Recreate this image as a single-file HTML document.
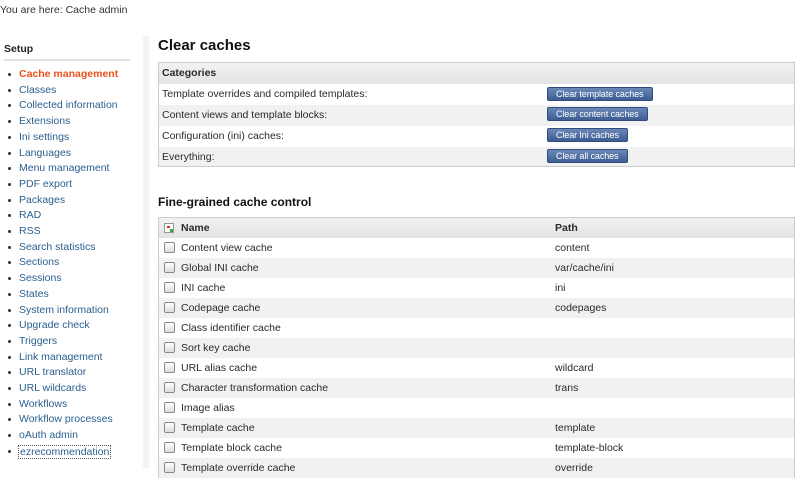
<!DOCTYPE html>
<html><head><style>
*{margin:0;padding:0;box-sizing:border-box}
body{width:800px;height:476px;overflow:hidden;background:#fff;font-family:"Liberation Sans",sans-serif;font-size:10.5px;color:#2a2a2a;position:relative}
.a{position:absolute;white-space:nowrap}
.nav{color:#2a5f8f}
.dot{position:absolute;width:3px;height:3px;background:#333;border-radius:50%}
.row{position:absolute;left:158px;width:637px;height:21px;border-left:1px solid #ccc;border-right:1px solid #ccc}
.g{background:#f1f1f1}
.btn{position:absolute;left:547px;height:14px;background:linear-gradient(#6a88b8,#3d5d93);border:1px solid #2f4c7d;border-radius:2px;color:#fff;font-size:9px;line-height:12px;padding-left:8px;letter-spacing:-0.1px}
.cb{position:absolute;left:164px;width:11px;height:11px;border:1px solid #888;border-radius:2px;background:linear-gradient(#fff,#ddd)}
</style></head><body>
<div class="a" style="left:0;top:4px;color:#333">You are here: Cache admin</div>
<div class="a" style="left:4px;top:43px;font-weight:bold;color:#222">Setup</div>
<div style="position:absolute;left:4px;top:59px;width:126px;height:2px;background:#e2e2e2"></div>
<div style="position:absolute;left:143px;top:36px;width:6px;height:432px;background:#f3f3f3"></div>
<div id="nav"></div>
<div class="a" style="left:158px;top:37px;font-size:15px;font-weight:bold;color:#111">Clear caches</div>
<div class="row" style="top:62px;height:22px;border-top:1px solid #ccc;background:linear-gradient(#f2f2f2,#e3e3e3);"><span class="a" style="left:3px;top:4px;font-weight:bold">Categories</span></div>
<div class="row" style="top:84px"><span class="a" style="left:3px;top:4px">Template overrides and compiled templates:</span></div>
<div class="row g" style="top:105px"><span class="a" style="left:3px;top:4px">Content views and template blocks:</span></div>
<div class="row" style="top:126px"><span class="a" style="left:3px;top:4px">Configuration (ini) caches:</span></div>
<div class="row g" style="top:147px;border-bottom:1px solid #ccc;height:20px"><span class="a" style="left:3px;top:4px">Everything:</span></div>
<div class="btn" style="top:87px;width:106px">Clear template caches</div>
<div class="btn" style="top:107px;width:101px">Clear content caches</div>
<div class="btn" style="top:128px;width:81px">Clear Ini caches</div>
<div class="btn" style="top:149px;width:81px">Clear all caches</div>
<div class="a" style="left:158px;top:195px;font-size:12px;font-weight:bold;color:#111">Fine-grained cache control</div>
<div class="row" style="top:217px;height:21px;border-top:1px solid #ccc;background:linear-gradient(#f2f2f2,#e3e3e3)">
<span style="position:absolute;left:5px;top:5px;width:10px;height:10px;border:1px solid #999;background:#fff"><span style="position:absolute;left:2px;top:2px;width:3px;height:2px;background:#c33"></span><span style="position:absolute;left:5px;top:5px;width:3px;height:3px;background:#3a3"></span></span>
<span class="a" style="left:22px;top:4px;font-weight:bold">Name</span><span class="a" style="left:396px;top:4px;font-weight:bold">Path</span></div>
<div id="t2"></div>
<script>
var n=["Cache management","Classes","Collected information","Extensions","Ini settings","Languages","Menu management","PDF export","Packages","RAD","RSS","Search statistics","Sections","Sessions","States","System information","Upgrade check","Triggers","Link management","URL translator","URL wildcards","Workflows","Workflow processes","oAuth admin","ezrecommendation"];
var h="";
n.forEach(function(t,i){var y=68+i*15.7;
h+='<div class="dot" style="left:8px;top:'+(y+5)+'px"></div><div class="a nav" style="left:19px;top:'+y+'px;'+(i==0?'color:#e8501c;font-weight:bold;':'')+(i==24?'border:1px dotted #555;padding:0 1px;left:18px;':'')+'">'+t+'</div>';});
document.getElementById("nav").innerHTML=h;
var r=[["Content view cache","content"],["Global INI cache","var/cache/ini"],["INI cache","ini"],["Codepage cache","codepages"],["Class identifier cache",""],["Sort key cache",""],["URL alias cache","wildcard"],["Character transformation cache","trans"],["Image alias",""],["Template cache","template"],["Template block cache","template-block"],["Template override cache","override"]];
h="";
r.forEach(function(e,i){var y=238+i*20;
h+='<div class="row'+(i%2?' g':'')+'" style="top:'+y+'px;height:20px"><span class="a" style="left:22px;top:4px">'+e[0]+'</span><span class="a" style="left:396px;top:4px">'+e[1]+'</span></div><div class="cb" style="top:'+(y+4)+'px"></div>';});
document.getElementById("t2").innerHTML=h;
</script>
</body></html>
